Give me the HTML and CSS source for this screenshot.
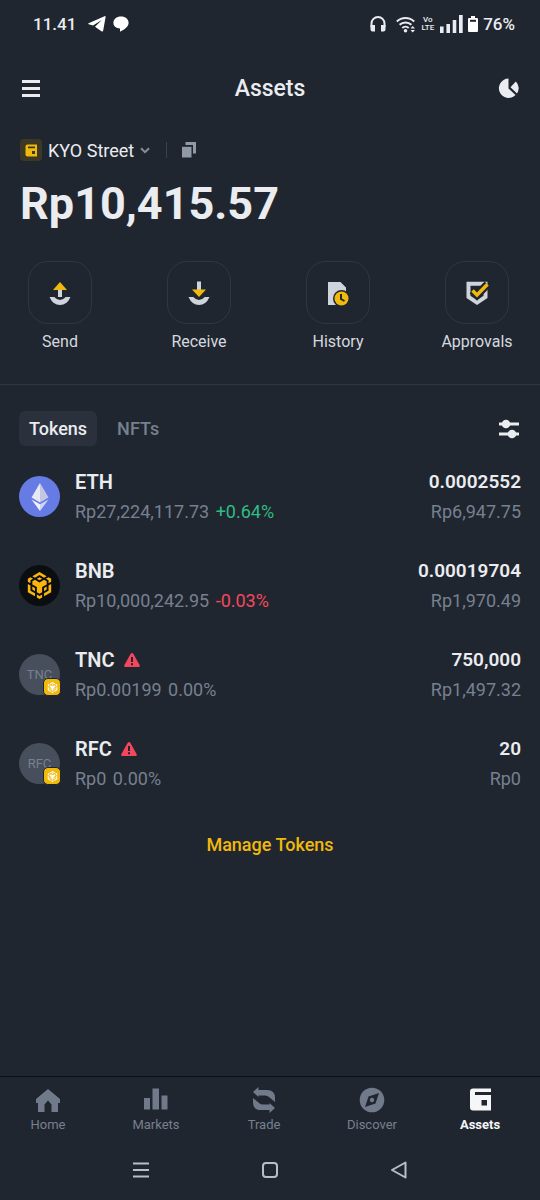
FILE: index.html
```html
<!DOCTYPE html>
<html lang="en">
<head>
    <meta charset="UTF-8">
    <meta name="viewport" content="width=device-width, initial-scale=1.0">
    <title>Assets</title>
    <link rel="stylesheet" href="styles.css">
</head>
<body>
    <!-- Shared symbols -->
    <svg class="symbols" aria-hidden="true">
        <symbol id="bnb" viewBox="0 0 24 24">
            <path d="M5.631 3.676 12.001 0l6.367 3.676-2.34 1.358L12 2.716 7.972 5.034l-2.34-1.358Zm12.737 4.636-2.34-1.358L12 9.272 7.972 6.954l-2.34 1.358v2.716l4.026 2.318v4.636L12 19.341l2.341-1.359v-4.636l4.027-2.318V8.312Zm0 7.352v-2.716l-2.34 1.358v2.716l2.34-1.358Zm1.663.96-4.027 2.318v2.717l6.368-3.677V10.63l-2.34 1.358v4.636Zm-2.34-10.63 2.34 1.358v2.716l2.341-1.358V5.994l-2.34-1.358-2.342 1.358ZM9.657 19.926v2.716L12 24l2.341-1.358v-2.716L12 21.284l-2.342-1.358Zm-4.027-4.262 2.341 1.358v-2.716l-2.34-1.358v2.716Zm4.027-9.67L12 7.352l2.341-1.358L12 4.636 9.658 5.994Zm-5.69 1.358 2.341-1.358-2.34-1.358-2.342 1.358V8.71l2.342 1.358V7.352Zm0 4.636L1.627 10.63v7.352l6.367 3.677v-2.717L3.968 16.624v-4.636Z"/>
        </symbol>
        <symbol id="warning" viewBox="0 0 16 14">
            <path d="M8 0 Q8.800 0 9.300 .8 L15.700 12.200 Q16.300 14 14.500 14 H1.500 Q-.3 14 .3 12.200 L6.700 .8 Q7.200 0 8 0Z" fill="#f6465d"/>
            <path d="M7 4h2v5H7zM7 10.200h2v2H7z" fill="#20262f"/>
        </symbol>
    </svg>

    <div class="status-bar">
        <div class="status-left">
            <span>11.41</span>
            <svg width="18" height="16" viewBox="0 0 18 16" fill="#fff"><path d="M.6 7.200 16.500.2q1.300-.4 1.100.9L15.200 14.500q-.4 1.600-1.800.7L7 10.800 13.800 4 5 9.600.7 8.300q-1-.5-.1-1.100z"/></svg>
            <svg width="16" height="16" viewBox="0 0 16 16" fill="#fff"><path d="M8 .5c4.500 0 7.600 2.600 7.600 6.200 0 4-4 6.600-8.600 9V12.500C3 12.200.4 9.900.4 6.700.4 3.100 3.500.5 8 .5z"/></svg>
        </div>
        <div class="status-right">
            <svg width="16" height="16" viewBox="0 0 16 16"><path d="M1.500 11V7.500a6.500 6.500 0 0 1 13 0V11" fill="none" stroke="#e9ecf1" stroke-width="2"/><path d="M.5 9h4.500v6.500H2.500q-2 0-2-2zM11 9h4.500v4.500q0 2-2 2H11z" fill="#e9ecf1"/></svg>
            <svg class="wifi" width="20" height="17" viewBox="0 0 20 17"><g fill="none" stroke="#e9ecf1" stroke-width="2"><path d="M.8 5.500a12.500 12.500 0 0 1 17.400 0"/><path d="M3.600 8.800a8.500 8.500 0 0 1 11.800 0"/><path d="M6.300 12a4.700 4.700 0 0 1 6.400 0"/></g><circle cx="9.500" cy="14.700" r="1.800" fill="#e9ecf1"/><path d="M14.500 12.500 16.700 10 19 12.500zM14.500 14 16.700 16.500 19 14z" fill="#e9ecf1"/></svg>
            <span class="volte"><span>Vo</span><span>LTE</span></span>
            <svg class="signal" width="23" height="18" viewBox="0 0 23 18" fill="#e9ecf1"><path d="M0 11.500h3.600V18H0zM6.400 9H10v9H6.400zM12.700 5h3.600v13h-3.600zM19 0h3.700v18H19z"/></svg>
            <svg width="10" height="16" viewBox="0 0 10 16"><path d="M3 0h4v2h2q1 0 1 1v12q0 1-1 1H1q-1 0-1-1V3q0-1 1-1h2z" fill="#fff"/><path d="M2 3.800h6v2H2z" fill="#20262f"/></svg>
            <span>76%</span>
        </div>
    </div>

    <header class="header">
        <button class="icon-button" aria-label="Menu">
            <svg width="22" height="20" viewBox="0 0 22 20" fill="#eaecef"><path d="M2 2h18v3H2zM2 9h18v3H2zM2 16h18v3H2z"/></svg>
        </button>
        <h1>Assets</h1>
        <button class="icon-button" aria-label="Portfolio breakdown">
            <svg width="22" height="20" viewBox="0 0 22 20" fill="#eaecef"><path d="M10.500 .5V10.500L17.500 17A9.700 9.700 0 1 1 10.500 .5z"/><path d="M12.500 9.300 17.800 3.400A9.500 9.500 0 0 1 19 15.500z"/></svg>
        </button>
    </header>

    <main class="main">
        <section class="account">
            <div class="account-row">
                <button class="account-select">
                    <svg width="22" height="22" viewBox="0 0 22 22"><rect width="22" height="22" rx="4" fill="#3d3726"/><path d="M7.500 5.500H17v12H7.500q-2 0-2-2v-8q0-2 2-2z" fill="#f0b90b"/><path d="M8 7.500h7v1.800H8zM12 12h3v3h-3z" fill="#3d3726"/></svg>
                    <span>KYO Street</span>
                    <svg width="10" height="7" viewBox="0 0 10 7"><path d="M1 1.200 5 5.200 9 1.200" fill="none" stroke="#848e9c" stroke-width="2"/></svg>
                </button>
                <span class="separator"></span>
                <button class="copy" aria-label="Copy address">
                    <svg width="16" height="16" viewBox="0 0 16 16" fill="#9099a6"><path d="M4.500 0H15v11.500h-3V3H4.500z"/><path d="M1 4.800h9.500V15.500H1z"/></svg>
                </button>
            </div>
            <div class="balance">Rp10,415.57</div>
        </section>

        <section class="actions">
            <button class="action">
                <span class="action-icon"><svg width="24" height="26" viewBox="0 0 24 26"><path d="M10 10h4v7h-4z" fill="#cfd4dc"/><path d="M5 10 12 2l7 8z" fill="#f0b90b"/><path d="M1.500 17H6.200Q12 23 17.800 17H22.500Q19 25 12 25T1.500 17z" fill="#cfd4dc"/></svg></span>
                <span>Send</span>
            </button>
            <button class="action">
                <span class="action-icon"><svg width="24" height="26" viewBox="0 0 24 26"><path d="M10 1.500h4V10h-4z" fill="#cfd4dc"/><path d="M5 9.500h14l-7 7.500z" fill="#f0b90b"/><path d="M1.500 17H6.200Q12 23 17.800 17H22.500Q19 25 12 25T1.500 17z" fill="#cfd4dc"/></svg></span>
                <span>Receive</span>
            </button>
            <button class="action">
                <span class="action-icon"><svg width="24" height="26" viewBox="0 0 24 26"><path d="M2 2h12.500L20 7.500V18H10v7H2z" fill="#cfd4dc"/><circle cx="15.500" cy="18.500" r="8.500" fill="#20262f"/><circle cx="15.500" cy="18.500" r="7" fill="#f0b90b"/><path d="M15 14v5l3.500 2" fill="none" stroke="#20262f" stroke-width="2"/></svg></span>
                <span>History</span>
            </button>
            <button class="action">
                <span class="action-icon"><svg width="24" height="26" viewBox="0 0 24 26"><path d="M3.500 3.800H20.500V17L12 22.500 3.500 17z" fill="none" stroke="#cfd4dc" stroke-width="4"/><path d="M7.500 10.500 12 15 22.500 4.200" fill="none" stroke="#20262f" stroke-width="8"/><path d="M7.500 10.500 12 15 22.500 4.200" fill="none" stroke="#f0b90b" stroke-width="3.500"/></svg></span>
                <span>Approvals</span>
            </button>
        </section>

        <section class="tokens">
            <div class="tabs">
                <button class="tab active">Tokens</button>
                <button class="tab">NFTs</button>
                <button class="filter" aria-label="Filter">
                    <svg width="20" height="20" viewBox="0 0 20 20" fill="#eaecef"><path d="M0 3.500h20v3H0zM0 13.500h20v3H0z"/><circle cx="7" cy="5" r="4.300"/><circle cx="13" cy="15" r="4.300"/></svg>
                </button>
            </div>

            <ul class="token-list">
                <li class="token">
                    <span class="token-icon eth">
                        <svg width="18" height="28" viewBox="0 0 18 28"><path d="M9 0v19.500L.5 14.500z" fill="#e6e8f4"/><path d="M9 0v19.500l8.500-5z" fill="#c3c7e3"/><path d="M.5 16.500 9 21.300V28z" fill="#f0f1fa"/><path d="M17.500 16.500 9 21.300V28z" fill="#cfd6f4"/></svg>
                    </span>
                    <div class="token-info">
                        <div class="name">ETH</div>
                        <div class="price">Rp27,224,117.73 <span class="up">+0.64%</span></div>
                    </div>
                    <div class="token-amount">
                        <div class="amount">0.0002552</div>
                        <div class="price">Rp6,947.75</div>
                    </div>
                </li>
                <li class="token">
                    <span class="token-icon bnb"><svg width="27" height="27"><use href="#bnb"/></svg></span>
                    <div class="token-info">
                        <div class="name">BNB</div>
                        <div class="price">Rp10,000,242.95 <span class="down">-0.03%</span></div>
                    </div>
                    <div class="token-amount">
                        <div class="amount">0.00019704</div>
                        <div class="price">Rp1,970.49</div>
                    </div>
                </li>
                <li class="token">
                    <span class="token-icon">TNC<span class="chain"><svg width="11" height="11"><use href="#bnb"/></svg></span></span>
                    <div class="token-info">
                        <div class="name">TNC <svg width="16" height="14"><use href="#warning"/></svg></div>
                        <div class="price">Rp0.00199 <span>0.00%</span></div>
                    </div>
                    <div class="token-amount">
                        <div class="amount">750,000</div>
                        <div class="price">Rp1,497.32</div>
                    </div>
                </li>
                <li class="token">
                    <span class="token-icon">RFC<span class="chain"><svg width="11" height="11"><use href="#bnb"/></svg></span></span>
                    <div class="token-info">
                        <div class="name">RFC <svg width="16" height="14"><use href="#warning"/></svg></div>
                        <div class="price">Rp0 <span>0.00%</span></div>
                    </div>
                    <div class="token-amount">
                        <div class="amount">20</div>
                        <div class="price">Rp0</div>
                    </div>
                </li>
            </ul>

            <button class="manage">Manage Tokens</button>
        </section>
    </main>

    <nav class="bottom-nav">
        <a href="#home">
            <svg width="26" height="26" viewBox="0 0 26 26" fill="#707a8a"><path d="M13 2 25 12v4h-2v9h-6.500v-7.500L13 13.500 9.500 17.500V25H3v-9H1v-4z"/></svg>
            <span>Home</span>
        </a>
        <a href="#markets">
            <svg width="26" height="26" viewBox="0 0 26 26" fill="#707a8a"><path d="M1 11h6v11.500H1zM9.500 1.500H16v21H9.500zM18.500 8.500h6v14h-6z"/></svg>
            <span>Markets</span>
        </a>
        <a href="#trade">
            <svg width="26" height="26" viewBox="0 0 26 26" fill="#707a8a"><path d="M2 5 7.500 0v3H16q8 0 8 8v4l-6-5q-1.500-1.500-4-1.500H7.500V10z"/><path d="M24 21 18.500 26v-3H10q-8 0-8-8v-4l6 5q1.500 1.500 4 1.500h6.500V16z"/></svg>
            <span>Trade</span>
        </a>
        <a href="#discover">
            <svg width="26" height="26" viewBox="0 0 26 26"><circle cx="13" cy="13" r="12.300" fill="#707a8a"/><path d="M20 6 16.500 16.500 6 20 9.500 9.500z" fill="#20262f"/><circle cx="13" cy="13" r="2.200" fill="#707a8a"/></svg>
            <span>Discover</span>
        </a>
        <a href="#assets" class="active">
            <svg width="26" height="26" viewBox="0 0 26 26"><path d="M6 1.500h18v22H6q-3 0-3-3v-16q0-3 3-3z" fill="#f5f6f8"/><path d="M8 5h16v3H8zM14.500 13h5.500v5.500h-5.500z" fill="#20262f"/></svg>
            <span>Assets</span>
        </a>
    </nav>

    <div class="system-nav">
        <button aria-label="Recent apps"><svg width="18" height="18" viewBox="0 0 18 18"><path d="M1 2.500h16M1 9h16M1 15.500h16" stroke="#b9bec6" stroke-width="2"/></svg></button>
        <button aria-label="Home screen"><svg width="18" height="18" viewBox="0 0 18 18"><rect x="2" y="2" width="14" height="14" rx="3" fill="none" stroke="#b9bec6" stroke-width="2"/></svg></button>
        <button aria-label="Back"><svg width="18" height="18" viewBox="0 0 18 18"><path d="M15.500 1.500v15L2 9z" fill="none" stroke="#b9bec6" stroke-width="2" stroke-linejoin="round"/></svg></button>
    </div>
</body>
</html>
```

FILE: styles.css
```css
/* Global Styles */
* {
    box-sizing: border-box;
}

body {
    margin: 0;
    min-height: 100vh;
    display: flex;
    flex-direction: column;
    background: #20262f;
    color: #eaecef;
    font-family: Roboto, "Noto Sans", sans-serif;
}

button {
    padding: 0;
    border: 0;
    background: none;
    color: inherit;
    font: inherit;
    cursor: pointer;
}

svg {
    display: block;
    flex-shrink: 0;
}

.symbols {
    position: absolute;
    width: 0;
    height: 0;
}

/* Status bar */
.status-bar {
    display: flex;
    justify-content: space-between;
    align-items: center;
    height: 48px;
    padding: 0 25px 0 33px;
    font-size: 17px;
    font-weight: 500;
}

.status-left,
.status-right {
    display: flex;
    align-items: center;
    gap: 5px;
}

.status-left {
    gap: 7px;
}

.status-left span {
    margin-right: 5px;
}

.wifi {
    margin-left: 5px;
}

.volte {
    display: flex;
    flex-direction: column;
    align-items: center;
    font-size: 8px;
    line-height: 8px;
}

.signal {
    margin-left: 1px;
}

/* Header */
.header {
    display: flex;
    justify-content: space-between;
    align-items: center;
    height: 80px;
    padding: 0 20px;
}

.header h1 {
    margin: 0;
    font-size: 23px;
    font-weight: 500;
}

/* Account */
.main {
    flex: 1;
}

.account {
    padding: 10px 20px 0;
}

.account-row {
    display: flex;
    align-items: center;
    height: 24px;
}

.account-select {
    display: flex;
    align-items: center;
    gap: 6px;
    font-size: 18px;
}

.separator {
    width: 1px;
    height: 16px;
    margin: 0 14px 0 16px;
    background: #3a424e;
}

.balance {
    margin-top: 14px;
    font-size: 45px;
    font-weight: 700;
    line-height: 56px;
}

/* Actions */
.actions {
    display: flex;
    justify-content: space-between;
    padding: 29px 31px 32px 28px;
    border-bottom: 1px solid #303742;
}

.action {
    display: flex;
    flex-direction: column;
    align-items: center;
    gap: 8px;
    width: 64px;
    font-size: 16px;
    line-height: 20px;
    color: #d5d9df;
}

.action-icon {
    display: grid;
    place-items: center;
    width: 64px;
    height: 63px;
    border: 1px solid #303742;
    border-radius: 20px;
}

/* Tokens */
.tokens {
    padding: 26px 19px 0;
}

.tabs {
    display: flex;
    align-items: center;
    gap: 10px;
}

.tab {
    height: 35px;
    padding: 0 10px;
    border-radius: 6px;
    font-size: 18px;
    font-weight: 500;
    color: #77808f;
}

.tab.active {
    background: #2a313c;
    color: #eaecef;
}

.filter {
    margin: 0 2px 0 auto;
}

.token-list {
    margin: 6px 0 0;
    padding: 0;
    list-style: none;
}

.token {
    display: flex;
    align-items: center;
    gap: 15px;
    height: 89px;
}

.token-icon {
    position: relative;
    display: grid;
    place-items: center;
    width: 41px;
    height: 41px;
    border-radius: 50%;
    background: #474f5d;
    color: #77808f;
    font-size: 13px;
}

.token-icon.eth {
    background: #667ce4;
}

.token-icon.bnb {
    background: #0b0e11;
    fill: #fcb60b;
}

.chain {
    position: absolute;
    right: -1px;
    bottom: -1px;
    display: grid;
    place-items: center;
    width: 18px;
    height: 18px;
    border: 1px solid #20262f;
    border-radius: 5px;
    background: #f0b90b;
    fill: #fff;
}

.name,
.amount {
    font-size: 20px;
    font-weight: 600;
    line-height: 30px;
}

.amount {
    font-size: 19px;
}

.name {
    display: flex;
    align-items: center;
    gap: 9px;
}

.price {
    font-size: 18px;
    line-height: 30px;
    color: #77808f;
}

.price span {
    margin-left: 2px;
}

.token-amount {
    margin-left: auto;
    text-align: right;
}

.up {
    color: #2ebd85;
}

.down {
    color: #f6465d;
}

.manage {
    display: block;
    margin: 24px auto;
    font-size: 18px;
    font-weight: 500;
    line-height: 26px;
    color: #f0b90b;
}

/* Bottom navigation */
.bottom-nav {
    display: flex;
    justify-content: space-between;
    padding: 10px 28px 0 16px;
    border-top: 1px solid #0b0e11;
}

.bottom-nav a {
    display: flex;
    flex-direction: column;
    align-items: center;
    justify-content: space-between;
    width: 64px;
    height: 46px;
    color: #77808f;
    font-size: 13px;
    line-height: 16px;
    text-decoration: none;
}

.bottom-nav a.active {
    color: #f5f6f8;
    font-weight: 700;
}

.system-nav {
    display: flex;
    justify-content: center;
    gap: 111px;
    padding: 28px 0 21px;
}
```
